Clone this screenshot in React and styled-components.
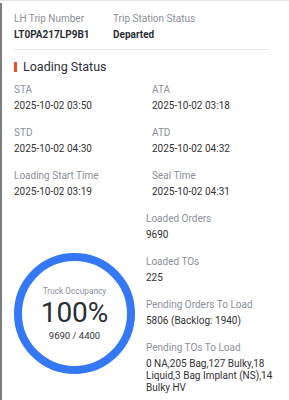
import React from "react";
import styled, { createGlobalStyle } from "styled-components";

const GlobalStyle = createGlobalStyle`
  html, body {
    margin: 0;
    padding: 0;
    background: #ffffff;
  }
  body {
    font-family: Roboto, "Liberation Sans", Arial, sans-serif;
    -webkit-font-smoothing: antialiased;
  }
`;

const Frame = styled.div`
  width: 289px;
  height: 400px;
  overflow: hidden;
  display: flex;
  border-top: 1px solid #e4e4e4;
  box-sizing: border-box;
`;

const LeftEdge = styled.div`
  width: 2px;
  margin-top: 2px;
  background: #7d7d7d;
  flex-shrink: 0;
`;

const Panel = styled.div`
  flex: 1;
  padding: 11px 0 0 11px;
  display: flex;
  flex-direction: column;
`;

const Scrollbar = styled.div`
  width: 6px;
  margin-left: 15px;
  display: flex;
  flex-direction: column;
  align-items: center;
  flex-shrink: 0;
`;

const Arrow = styled.div`
  width: 0;
  height: 0;
  margin-top: 6px;
  border-left: 3px solid transparent;
  border-right: 3px solid transparent;
  border-bottom: 5px solid #8c8c8c;
`;

const Thumb = styled.div`
  width: 6px;
  flex: 1;
  margin-top: 8px;
  background: #8c8c8c;
  border-radius: 3px 3px 0 0;
`;

const HeaderRow = styled.div`
  display: flex;
  padding-left: 1px;
`;

const Field = styled.div`
  width: ${p => p.w || "auto"};
  display: flex;
  flex-direction: column;
`;

const Label = styled.div`
  font-size: 10px;
  line-height: 14px;
  color: #8b9099;
  white-space: nowrap;
`;

const Value = styled.div`
  font-size: 10px;
  line-height: 12px;
  margin-top: 3px;
  color: ${p => (p.bold ? "#2b2f36" : "#333333")};
  font-weight: ${p => (p.bold ? 700 : 400)};
`;

const Divider = styled.div`
  height: 1px;
  background: #e8e9ee;
  margin: 8px 0 0 0;
  width: 256px;
`;

const SectionTitle = styled.div`
  display: flex;
  align-items: center;
  gap: 6px;
  margin-top: 9px;
  padding-left: 1px;
  font-size: 12.5px;
  line-height: 16px;
  color: #2b2f36;
`;

const RedBar = styled.span`
  width: 3px;
  height: 10px;
  background: #ee4d2d;
`;

const TimeGrid = styled.div`
  display: grid;
  grid-template-columns: 138px 1fr;
  row-gap: 14px;
  margin-top: 8px;
  padding-left: 1px;
`;

const Lower = styled.div`
  display: flex;
  align-items: center;
  margin-top: 14px;
`;

const Ring = styled.div`
  width: 121px;
  height: 121px;
  box-sizing: border-box;
  border: 8px solid #3478f6;
  border-radius: 50%;
  margin: 20px 0 0 1px;
  flex-shrink: 0;
  display: flex;
  flex-direction: column;
  align-items: center;
  justify-content: center;
`;

const RingCaption = styled.div`
  font-size: 8.3px;
  color: #8b9099;
  line-height: 10px;
`;

const Percent = styled.div`
  font-size: 28px;
  line-height: 30px;
  color: #2b2f36;
  margin-top: 2px;
`;

const RingCount = styled.div`
  font-size: 9.5px;
  line-height: 11px;
  color: #333333;
  margin-top: 2px;
`;

const Stats = styled.div`
  margin-left: 11px;
  width: 134px;
  display: flex;
  flex-direction: column;
  gap: 14px;
`;

const times = [
  ["STA", "2025-10-02 03:50"],
  ["ATA", "2025-10-02 03:18"],
  ["STD", "2025-10-02 04:30"],
  ["ATD", "2025-10-02 04:32"],
  ["Loading Start Time", "2025-10-02 03:19"],
  ["Seal Time", "2025-10-02 04:31"],
];

const stats = [
  ["Loaded Orders", "9690"],
  ["Loaded TOs", "225"],
  ["Pending Orders To Load", "5806 (Backlog: 1940)"],
  ["Pending TOs To Load", "0 NA,205 Bag,127 Bulky,18 Liquid,3 Bag Implant (NS),14 Bulky HV"],
];

export default function App() {
  return (
    <>
      <GlobalStyle />
      <Frame>
        <LeftEdge />
        <Panel>
          <HeaderRow>
            <Field w="99px">
              <Label>LH Trip Number</Label>
              <Value bold>LT0PA217LP9B1</Value>
            </Field>
            <Field>
              <Label>Trip Station Status</Label>
              <Value bold>Departed</Value>
            </Field>
          </HeaderRow>
          <Divider />
          <SectionTitle>
            <RedBar />
            Loading Status
          </SectionTitle>
          <TimeGrid>
            {times.map(([label, value]) => (
              <Field key={label}>
                <Label>{label}</Label>
                <Value>{value}</Value>
              </Field>
            ))}
          </TimeGrid>
          <Lower>
            <Ring>
              <RingCaption>Truck Occupancy</RingCaption>
              <Percent>100%</Percent>
              <RingCount>9690 / 4400</RingCount>
            </Ring>
            <Stats>
              {stats.map(([label, value]) => (
                <Field key={label}>
                  <Label>{label}</Label>
                  <Value>{value}</Value>
                </Field>
              ))}
            </Stats>
          </Lower>
        </Panel>
        <Scrollbar>
          <Arrow />
          <Thumb />
        </Scrollbar>
      </Frame>
    </>
  );
}
